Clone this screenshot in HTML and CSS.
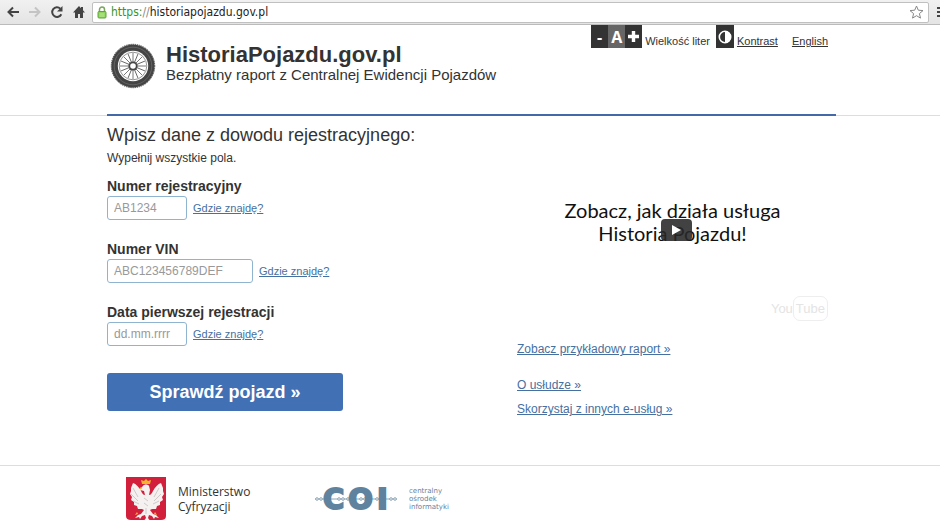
FILE: index.html
```html
<!DOCTYPE html>
<html lang="pl">
  <head>
    <meta charset="UTF-8" />
    <title>HistoriaPojazdu.gov.pl</title>
    <link rel="stylesheet" href="styles.css">
  </head>
  <body>
    <div class="browser-bar">
      <button class="nav-button" aria-label="Wstecz">
        <svg width="14" height="14" viewBox="0 0 14 14" fill="none" stroke="#444" stroke-width="2"><path d="M13 7H2.5M7 2.5L2.5 7L7 11.5" /></svg>
      </button>
      <button class="nav-button" aria-label="Dalej">
        <svg width="14" height="14" viewBox="0 0 14 14" fill="none" stroke="#c4c4c4" stroke-width="2"><path d="M1 7h10.5M7 2.5L11.5 7L7 11.5" /></svg>
      </button>
      <button class="nav-button" aria-label="Odśwież">
        <svg width="14" height="14" viewBox="0 0 14 14"><path d="M11.3 9.2A4.8 4.8 0 1 1 10.3 3.6" fill="none" stroke="#444" stroke-width="2" /><path d="M12.5 1v5.5H7z" fill="#444" /></svg>
      </button>
      <button class="nav-button" aria-label="Strona główna">
        <svg width="14" height="14" viewBox="0 0 14 14" fill="#444"><path d="M7 1L1 7.5h2V13h3V9h2v4h3V7.5h2L11 5.3V2H9v1.2z" /></svg>
      </button>
      <div class="address">
        <svg width="10" height="13" viewBox="0 0 10 13"><path d="M2.5 6V3.5a2.5 2.5 0 0 1 5 0V6" fill="none" stroke="#7ba65e" stroke-width="1.5" /><rect x="1" y="5.5" width="8" height="6.5" rx="1" fill="#8ed45c" stroke="#5fa53a" /><path d="M2.5 8h5M2.5 10h5" stroke="#bdea9a" /></svg>
        <span class="url"><span class="secure">https:</span><span class="slashes">//</span>historiapojazdu.gov.pl</span>
        <svg class="star" width="15" height="14" viewBox="0 0 15 14"><path d="M7.5 1l1.8 4.2 4.7.4-3.6 3 1.1 4.5-4-2.4-4 2.4 1.1-4.5-3.6-3 4.7-.4z" fill="#fff" stroke="#888" /></svg>
      </div>
      <svg class="menu" width="3" height="14" viewBox="0 0 3 14"><path d="M0 3h3M0 7h3M0 11h3" stroke="#444" stroke-width="2" /></svg>
    </div>

    <header class="header">
      <div class="container">
        <div class="brand">
          <svg class="wheel" width="46" height="46" viewBox="0 0 46 46">
            <circle cx="23" cy="23" r="21.5" fill="#444" />
            <circle cx="23" cy="23" r="21.7" fill="none" stroke="#444" stroke-width="1" stroke-dasharray="1.4 .8" />
            <circle cx="23" cy="23" r="18.8" fill="none" stroke="#777" stroke-width=".6" />
            <circle cx="23" cy="23" r="15.2" fill="#fff" />
            <circle cx="23" cy="23" r="13.8" fill="none" stroke="#666" stroke-width=".7" />
            <g stroke="#555" stroke-width=".8">
              <path id="spokes" d="M23 10v26M10 23h26M13.8 13.8l18.4 18.4M32.2 13.8L13.8 32.2" />
              <use href="#spokes" transform="rotate(22.5 23 23)" />
            </g>
            <circle cx="23" cy="23" r="4.6" fill="#444" />
            <circle cx="23" cy="23" r="2.8" fill="#fff" />
          </svg>
          <div>
            <h1>HistoriaPojazdu.gov.pl</h1>
            <p class="subtitle">Bezpłatny raport z Centralnej Ewidencji Pojazdów</p>
          </div>
        </div>
        <div class="tools">
          <div class="font-size">
            <button aria-label="Mniejsze litery">-</button>
            <button class="normal">A</button>
            <button aria-label="Większe litery"><svg width="13" height="13" viewBox="0 0 13 13"><path d="M6.5 1v11M1 6.5h11" stroke="#fff" stroke-width="3.4" /></svg></button>
          </div>
          <span class="size-label">Wielkość liter</span>
          <button class="contrast" aria-label="Kontrast"><svg width="14" height="14" viewBox="0 0 14 14"><circle cx="7" cy="7" r="5.7" fill="#333" stroke="#fff" stroke-width="1.6" /><path d="M7 1a6 6 0 0 1 0 12z" fill="#fff" /></svg></button>
          <a href="#">Kontrast</a>
          <a class="language" href="#">English</a>
        </div>
      </div>
    </header>

    <main class="container">
      <form class="form">
        <h2>Wpisz dane z dowodu rejestracyjnego:</h2>
        <p class="hint">Wypełnij wszystkie pola.</p>
        <div class="field">
          <label for="plate">Numer rejestracyjny</label>
          <div class="row">
            <input type="text" id="plate" placeholder="AB1234" />
            <a href="#">Gdzie znajdę?</a>
          </div>
        </div>
        <div class="field">
          <label for="vin">Numer VIN</label>
          <div class="row">
            <input type="text" id="vin" class="wide" placeholder="ABC123456789DEF" />
            <a href="#">Gdzie znajdę?</a>
          </div>
        </div>
        <div class="field">
          <label for="date">Data pierwszej rejestracji</label>
          <div class="row">
            <input type="text" id="date" placeholder="dd.mm.rrrr" />
            <a href="#">Gdzie znajdę?</a>
          </div>
        </div>
        <button type="button" class="submit">Sprawdź pojazd »</button>
      </form>

      <div class="side">
        <div class="video">
          <p>Zobacz, jak działa usługa<br>Historia Pojazdu!</p>
          <button class="play" aria-label="Odtwórz"><svg width="10" height="10" viewBox="0 0 10 10"><path d="M1 0l9 5-9 5z" fill="#fff" /></svg></button>
          <div class="youtube">You<span>Tube</span></div>
        </div>
        <ul class="links">
          <li class="report"><a href="#">Zobacz przykładowy raport »</a></li>
          <li><a href="#">O usłudze »</a></li>
          <li><a href="#">Skorzystaj z innych e-usług »</a></li>
        </ul>
      </div>
    </main>

    <footer class="footer">
      <div class="container">
        <svg class="crest" width="40" height="43" viewBox="0 0 40 43">
          <path d="M0 0h40v39q0 4-5 4H5q-5 0-5-4z" fill="#d2203c" />
          <g fill="#f5f1f0">
            <path d="M17 9c1-2 5-2 6 0l1 4-1 5c2 0 3-2 4-4 2-4 5-7 8-8l2 5v3l1 3-2 3 1 3-3 2v3l-3 1-1 3-4 0-2 1 3 4 3 1 3 3-4-1-1 2-2-3-3-1-1 3 3 4h-8l3-4-1-3-3 1-2 3-1-2-4 1 3-3 3-1 3-4-2-1-4 0-1-3-3-1v-3l-3-2 1-3-2-3 1-3v-3l2-5c3 1 6 4 8 8 1 2 2 4 4 4l-1-4-4-1 1-2z" />
          </g>
          <path d="M7 11l5 9M5 17l7 7M7 24l6 3M33 11l-5 9M35 17l-7 7M33 24l-6 3M18 21l4 3M18 26l4 3M20 31v6" fill="none" stroke="#c5bfbf" stroke-width=".8" />
          <path d="M16 7l-1-4 3 1 2-2 2 2 3-1-1 4z" fill="#f2b52d" />
          <path d="M15 10l-2 2 3 0zM11 35l-2 3 3-1zM29 35l2 3-3-1z" fill="#f2b52d" />
        </svg>
        <p class="ministry">Ministerstwo<br>Cyfryzacji</p>
        <div class="coi">
          <svg width="82" height="6" viewBox="0 0 82 6" fill="#fff" stroke="#718fa5" stroke-width=".8"><path d="M0 3h82" /><circle cx="2" cy="3" r="1.3" /><circle cx="6" cy="3" r="1.3" /><circle cx="24" cy="3" r="1.3" /><circle cx="28" cy="3" r="1.3" /><circle cx="33" cy="3" r="1.3" /><circle cx="46" cy="3" r="1.3" /><circle cx="50" cy="3" r="1.3" /><circle cx="62" cy="3" r="1.3" /><circle cx="76" cy="3" r="1.3" /><circle cx="80" cy="3" r="1.3" /></svg>
          <span>C</span><span>O</span><span>I</span>
        </div>
        <p class="coi-name">centralny<br>ośrodek<br>informatyki</p>
      </div>
    </footer>
  </body>
</html>
```
FILE: styles.css
```css
* {
  box-sizing: border-box;
}
body {
  margin: 0;
  font-family: "Liberation Sans", Arial, sans-serif;
  font-size: 12px;
  line-height: 16px;
  color: #333;
  background-color: #fff;
}
h1, h2, p, ul {
  margin: 0;
  padding: 0;
}
button {
  padding: 0;
  border: none;
  font-family: inherit;
  cursor: pointer;
}
a {
  color: #46709f;
}
.container {
  display: flex;
  margin: 0 104px 0 107px;
}

/* browser bar */
.browser-bar {
  display: flex;
  align-items: center;
  gap: 8px;
  height: 25px;
  padding-left: 6px;
  background: linear-gradient(#f1f1f1, #e4e4e4);
  border-bottom: 1px solid #bbb;
}
.nav-button {
  display: flex;
  background: none;
}
.address {
  display: flex;
  flex: 1;
  align-items: center;
  gap: 4px;
  height: 21px;
  margin-left: -2px;
  padding: 0 4px;
  background-color: #fff;
  border: 1px solid #c0c0c0;
  border-radius: 2px;
}
.url {
  flex: 1;
  font-family: "DejaVu Sans Condensed", "DejaVu Sans", sans-serif;
  font-size: 12px;
  color: #222;
}
.secure {
  color: #35952c;
}
.slashes {
  color: #888;
}
.menu {
  margin-left: 0;
}

/* header */
.header {
  border-bottom: 1px solid #ddd;
}
.header .container {
  justify-content: space-between;
  align-items: flex-start;
  height: 91px;
  margin-bottom: -1px;
  border-bottom: 2px solid #4468a8;
}
.brand {
  display: flex;
  gap: 10px;
  padding: 18px 0 0 3px;
}
h1 {
  font-size: 22px;
  line-height: 24px;
}
.subtitle {
  font-size: 15px;
  line-height: 16px;
}
.tools {
  display: flex;
  align-items: flex-start;
  padding-right: 8px;
}
.tools a, .size-label {
  margin: 8px 0 0 3px;
  font-size: 11px;
  color: #333;
}
.tools .language {
  margin-left: 14px;
}
.font-size {
  display: flex;
}
.font-size button, .contrast {
  display: flex;
  align-items: center;
  justify-content: center;
  width: 17px;
  height: 23px;
  font-family: "Open Sans", sans-serif;
  font-size: 16px;
  font-weight: bold;
  color: #fff;
  background-color: #333;
}
.font-size .normal {
  background-color: #666;
}
.contrast {
  width: 18px;
  margin-left: 6px;
}

/* form */
.form {
  width: 410px;
  padding-top: 7px;
}
h2 {
  font-size: 18px;
  font-weight: normal;
  line-height: 24px;
}
.hint {
  margin: 3px 0 10px;
}
.field {
  margin-bottom: 19px;
}
.field label {
  display: block;
  font-size: 14px;
  font-weight: bold;
  line-height: 20px;
}
.row {
  display: flex;
  align-items: center;
  gap: 6px;
}
.row a {
  font-size: 11px;
}
.row input {
  width: 80px;
  height: 24px;
  padding: 0 6px;
  font-family: inherit;
  font-size: 12px;
  border: 1px solid #8fb4cf;
  border-radius: 3px;
}
.row .wide {
  width: 146px;
}
.row input::placeholder {
  color: #999;
}
.submit {
  width: 236px;
  height: 38px;
  margin: 8px 0 54px;
  font-size: 18px;
  font-weight: bold;
  color: #fff;
  background-color: #4170b5;
  border-radius: 3px;
}

/* video and links */
.side {
  flex: 1;
  padding-top: 24px;
}
.video {
  position: relative;
  aspect-ratio: 16 / 9;
  padding: 59px 8px 0 0;
  font-family: Lato, sans-serif;
  font-size: 20px;
  line-height: 23px;
  text-align: center;
  color: #111;
}
.play {
  position: absolute;
  top: 50%;
  left: 50%;
  display: flex;
  align-items: center;
  justify-content: center;
  width: 31px;
  height: 22px;
  margin: -11px 0 0 -16px;
  background-color: rgba(40, 40, 40, 0.88);
  border-radius: 4px;
}
.youtube {
  position: absolute;
  right: 8px;
  bottom: -2px;
  display: flex;
  align-items: center;
  font-family: "Liberation Sans", Arial, sans-serif;
  font-size: 13px;
  color: #e4e4e4;
}
.youtube span {
  padding: 0 2px;
  border: 1px solid #eee;
  border-radius: 7px;
}
.links {
  margin-top: 22px;
  list-style: none;
}
.links li {
  margin-bottom: 8px;
}
.links .report {
  margin-bottom: 20px;
}

/* footer */
.footer {
  border-top: 1px solid #ddd;
}
.footer .container {
  padding: 11px 0 0 19px;
}
.ministry {
  width: 137px;
  margin: 7px 0 0 12px;
  font-family: "Open Sans", sans-serif;
  font-size: 12px;
  line-height: 15px;
}
.coi {
  position: relative;
  display: flex;
  gap: 4px;
  width: 82px;
  margin-top: 11px;
  padding-left: 8px;
  font-family: "DejaVu Sans", sans-serif;
  font-size: 29px;
  font-weight: bold;
  line-height: 22px;
  color: #5f839f;
  -webkit-text-stroke: 2px #5f839f;
}
.coi svg {
  position: absolute;
  z-index: -1;
  top: 8px;
  left: 0;
}
.coi-name {
  margin: 10px 0 0 12px;
  font-family: "DejaVu Sans", sans-serif;
  font-size: 7px;
  line-height: 8px;
  color: #5f839f;
}
```
